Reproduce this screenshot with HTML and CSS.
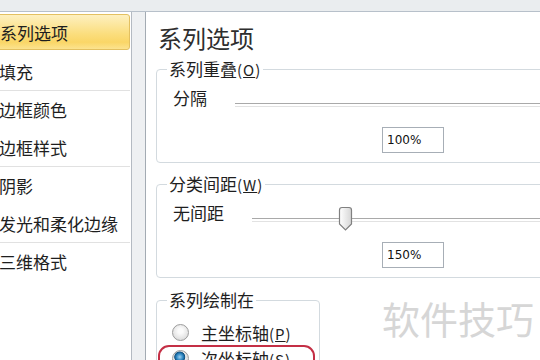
FILE: index.html
```html
<!DOCTYPE html>
<html lang="zh-CN">

<head>
    <meta charset="UTF-8">
    <meta name="viewport" content="width=device-width, initial-scale=1.0">
    <title>设置数据系列格式</title>
    <link rel="stylesheet" href="styles.css">
</head>

<body>
    <div class="window">
        <div class="top"></div>

        <div class="main">
            <!-- 左侧分类列表 -->
            <ul class="nav">
                <li class="item current">系列选项</li>
                <li class="item">填充</li>
                <li class="item sep">边框颜色</li>
                <li class="item">边框样式</li>
                <li class="item sep">阴影</li>
                <li class="item">发光和柔化边缘</li>
                <li class="item sep">三维格式</li>
            </ul>

            <!-- 右侧选项面板 -->
            <div class="panel">
                <h1 class="title">系列选项</h1>

                <fieldset class="group">
                    <legend>系列重叠<span class="key">(<u>O</u>)</span></legend>
                    <div class="row">
                        <span class="row-label">分隔</span>
                        <div class="slider"></div>
                    </div>
                    <div class="value">100%</div>
                </fieldset>

                <fieldset class="group">
                    <legend>分类间距<span class="key">(<u>W</u>)</span></legend>
                    <div class="row">
                        <span class="row-label">无间距</span>
                        <div class="slider">
                            <svg class="thumb" width="15" height="26" viewBox="0 0 15 26">
                                <defs>
                                    <linearGradient id="tg" x1="0" y1="0" x2="1" y2="0">
                                        <stop offset="0" stop-color="#ffffff" />
                                        <stop offset="1" stop-color="#d6d6d6" />
                                    </linearGradient>
                                </defs>
                                <path d="M1.5 4 Q1.5 1.5 4 1.5 H11 Q13.5 1.5 13.5 4 V18 L7.5 24 L1.5 18 Z"
                                    fill="url(#tg)" stroke="#808080" stroke-width="1.2" />
                            </svg>
                        </div>
                    </div>
                    <div class="value">150%</div>
                </fieldset>

                <fieldset class="group small">
                    <legend>系列绘制在</legend>
                    <label class="radio-row">
                        <span class="radio"></span>
                        <span>主坐标轴<span class="key">(<u>P</u>)</span></span>
                    </label>
                    <label class="radio-row marked">
                        <span class="radio on"></span>
                        <span>次坐标轴<span class="key">(<u>S</u>)</span></span>
                    </label>
                </fieldset>

                <div class="mark">软件技巧</div>
            </div>
        </div>
    </div>
</body>

</html>
```

FILE: styles.css
```css
* {
    box-sizing: border-box;
}

body {
    margin: 0;
    font-family: "Noto Sans CJK SC", "Liberation Sans", sans-serif;
    color: #1e1e1e;
}

.window {
    width: 540px;
    height: 360px;
    overflow: hidden;
    background-color: #eef0f2;
}

.top {
    height: 12px;
    background-color: #eaedef;
    border-bottom: 1px solid #b7c0ca;
}

.main {
    display: flex;
    gap: 13px;
    height: 348px;
}

/* 左侧列表 */
.nav {
    list-style: none;
    margin: 0 0 0 -5px;
    padding: 2px 0 0 0;
    width: 137px;
    flex-shrink: 0;
    background-color: #fff;
    border-right: 1px solid #b4bac2;
}

.item {
    height: 38px;
    display: flex;
    align-items: center;
    padding-left: 4px;
    margin-right: 1px;
    font-size: 17px;
    white-space: nowrap;
}

.item.sep {
    border-top: 1px solid #e1e1e1;
}

.item.current {
    height: 36px;
    margin-bottom: 2px;
    border: 1px solid #e3c060;
    border-radius: 3px;
    background: linear-gradient(#fdf0c0, #fbde7e 55%, #fad667 80%, #fce38f);
}

/* 右侧面板 */
.panel {
    flex: 1;
    position: relative;
    background-color: #fff;
    border-left: 1px solid #a3abb3;
    padding: 11px 0 0 10px;
    overflow: hidden;
}

.title {
    margin: 0 0 0 2px;
    font-size: 24px;
    font-weight: normal;
    line-height: 30px;
    color: #2e2e2e;
}

.group {
    margin: 6px -40px 0 0;
    padding: 0 0 9px 10px;
    min-width: 0;
    border: 1px solid #d3dadf;
    border-radius: 4px;
}

.group + .group {
    margin-top: 11px;
}

.group.small {
    margin-top: 12px;
    margin-right: 0;
    width: 164px;
    padding-bottom: 20px;
}

legend {
    padding: 0 2px;
    font-size: 17px;
    line-height: 20px;
}

.key {
    font-size: 15px;
    letter-spacing: 1px;
}

.row {
    display: flex;
    margin: 7px 0 0 6px;
}

.row-label {
    font-size: 17px;
    line-height: 22px;
}

.slider {
    flex: 1;
    position: relative;
    height: 26px;
    margin: 4px 0 0 28px;
}

.slider::before {
    content: "";
    position: absolute;
    left: 0;
    right: 0;
    top: 12px;
    height: 2px;
    border-top: 1px solid #a9a9a9;
    border-bottom: 1px solid #e2e2e2;
}

.thumb {
    position: absolute;
    left: 86px;
    top: 0;
}

.value {
    width: 62px;
    height: 26px;
    margin: 10px 0 0 215px;
    padding-left: 4px;
    border: 1px solid #a7aeb6;
    font-family: "DejaVu Sans", sans-serif;
    font-size: 12px;
    line-height: 24px;
    color: #111;
}

.radio-row {
    display: flex;
    align-items: center;
    gap: 12px;
    height: 22px;
    margin: 11px 0 0 5px;
    font-size: 17px;
}

.radio-row.marked {
    width: 157px;
    height: 26px;
    margin: 2px 0 0 -9px;
    padding-left: 12px;
    border: 2px solid #c42f45;
    border-radius: 11px;
}

.radio {
    width: 17px;
    height: 17px;
    border-radius: 50%;
    border: 1px solid #9c9c9c;
    background: radial-gradient(circle at 50% 40%, #fbfbfb 20%, #dedede 75%);
    flex-shrink: 0;
}

.radio.on {
    background: radial-gradient(circle at 45% 40%, #9fd2f2 0, #2a84c0 28%, #10507e 42%, #e9e9e9 48%, #d8d8d8 75%);
}

/* 水印 */
.mark {
    position: absolute;
    left: 236px;
    top: 287px;
    font-size: 38px;
    line-height: 1;
    color: #d6d6d6;
}
```
